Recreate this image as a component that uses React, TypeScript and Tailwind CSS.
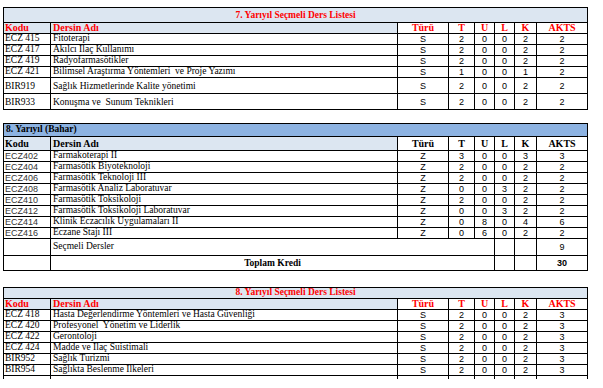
import React from 'react'

type Row = {
  kod: string
  ad: string
  tur: string
  t: string
  u: string
  l: string
  k: string
  akts: string
  tall?: boolean
}

const electives7: Row[] = [
  { kod: 'ECZ 415', ad: 'Fitoterapi', tur: 'S', t: '2', u: '0', l: '0', k: '2', akts: '2' },
  { kod: 'ECZ 417', ad: 'Akılcı İlaç Kullanımı', tur: 'S', t: '2', u: '0', l: '0', k: '2', akts: '2' },
  { kod: 'ECZ 419', ad: 'Radyofarmasötikler', tur: 'S', t: '2', u: '0', l: '0', k: '2', akts: '2' },
  { kod: 'ECZ 421', ad: 'Bilimsel Araştırma Yöntemleri  ve Proje Yazımı', tur: 'S', t: '1', u: '0', l: '0', k: '1', akts: '2' },
  { kod: 'BIR919', ad: 'Sağlık Hizmetlerinde Kalite yönetimi', tur: 'S', t: '2', u: '0', l: '0', k: '2', akts: '2', tall: true },
  { kod: 'BIR933', ad: 'Konuşma ve  Sunum Teknikleri', tur: 'S', t: '2', u: '0', l: '0', k: '2', akts: '2', tall: true },
]

const spring8: Row[] = [
  { kod: 'ECZ402', ad: 'Farmakoterapi II', tur: 'Z', t: '3', u: '0', l: '0', k: '3', akts: '3' },
  { kod: 'ECZ404', ad: 'Farmasötik Biyoteknoloji', tur: 'Z', t: '2', u: '0', l: '0', k: '2', akts: '2' },
  { kod: 'ECZ406', ad: 'Farmasötik Teknoloji III', tur: 'Z', t: '2', u: '0', l: '0', k: '2', akts: '2' },
  { kod: 'ECZ408', ad: 'Farmasötik Analiz Laboratuvar', tur: 'Z', t: '0', u: '0', l: '3', k: '2', akts: '2' },
  { kod: 'ECZ410', ad: 'Farmasötik Toksikoloji', tur: 'Z', t: '2', u: '0', l: '0', k: '2', akts: '2' },
  { kod: 'ECZ412', ad: 'Farmasötik Toksikoloji Laboratuvar', tur: 'Z', t: '0', u: '0', l: '3', k: '2', akts: '2' },
  { kod: 'ECZ414', ad: 'Klinik Eczacılık Uygulamaları II', tur: 'Z', t: '0', u: '8', l: '0', k: '4', akts: '6' },
  { kod: 'ECZ416', ad: 'Eczane Stajı III', tur: 'Z', t: '0', u: '6', l: '0', k: '2', akts: '2' },
]

const electives8: Row[] = [
  { kod: 'ECZ 418', ad: 'Hasta Değerlendirme Yöntemleri ve Hasta Güvenliği', tur: 'S', t: '2', u: '0', l: '0', k: '2', akts: '3' },
  { kod: 'ECZ 420', ad: 'Profesyonel  Yönetim ve Liderlik', tur: 'S', t: '2', u: '0', l: '0', k: '2', akts: '3' },
  { kod: 'ECZ 422', ad: 'Gerontoloji', tur: 'S', t: '2', u: '0', l: '0', k: '2', akts: '3' },
  { kod: 'ECZ 424', ad: 'Madde ve İlaç Suistimali', tur: 'S', t: '2', u: '0', l: '0', k: '2', akts: '3' },
  { kod: 'BIR952', ad: 'Sağlık Turizmi', tur: 'S', t: '2', u: '0', l: '0', k: '2', akts: '3' },
  { kod: 'BIR954', ad: 'Sağlıkta Beslenme İlkeleri', tur: 'S', t: '2', u: '0', l: '0', k: '2', akts: '3' },
]

const cell = "border border-black p-0 leading-none whitespace-pre overflow-hidden font-['Liberation_Serif',serif]"
const num = "border border-black p-0 leading-none text-center font-['Liberation_Sans',sans-serif] text-[9px]"

function Cols() {
  return (
    <colgroup>
      <col className="w-[47px]" />
      <col className="w-[347px]" />
      <col className="w-[51px]" />
      <col className="w-[26px]" />
      <col className="w-[20px]" />
      <col className="w-[20px]" />
      <col className="w-[22px]" />
      <col className="w-[51px]" />
    </colgroup>
  )
}

function Header({ red }: { red?: boolean }) {
  const color = red ? 'text-[#ff0000]' : 'text-black'
  const h = `${cell} font-bold text-[10px] ${color}`
  return (
    <tr className={red ? 'h-[10px]' : 'h-[14px]'}>
      <td className={`${h} bg-[#dce6f1] pl-[1px]`}>Kodu</td>
      <td className={`${h} bg-[#dce6f1] pl-[2px]`}>Dersin Adı</td>
      <td className={`${h} bg-white text-center`}>Türü</td>
      <td className={`${h} bg-white text-center`}>T</td>
      <td className={`${h} bg-white text-center`}>U</td>
      <td className={`${h} bg-white text-center`}>L</td>
      <td className={`${h} bg-white text-center`}>K</td>
      <td className={`${h} bg-white text-center`}>AKTS</td>
    </tr>
  )
}

function CourseRow({ r, sansCode }: { r: Row; sansCode?: boolean }) {
  const align = r.tall ? 'align-bottom pb-[2px]' : 'align-middle'
  const code = sansCode
    ? "border border-black p-0 leading-none font-['Liberation_Sans',sans-serif] text-[9px] text-[#333]"
    : `${cell} text-[9.5px]`
  return (
    <tr className={r.tall ? 'h-[16px]' : 'h-[11px]'}>
      <td className={`${code} ${align} pl-[1px]`}>{r.kod}</td>
      <td className={`${cell} ${align} text-[9.5px] pl-[2px]`}>{r.ad}</td>
      <td className={`${num} ${align}`}>{r.tur}</td>
      <td className={`${num} ${align}`}>{r.t}</td>
      <td className={`${num} ${align}`}>{r.u}</td>
      <td className={`${num} ${align}`}>{r.l}</td>
      <td className={`${num} ${align}`}>{r.k}</td>
      <td className={`${num} ${align}`}>{r.akts}</td>
    </tr>
  )
}

export default function App() {
  return (
    <div className="w-[603px] h-[388px] overflow-hidden bg-white font-['Liberation_Serif',serif] text-black pt-[7px] pl-[3px] flex flex-col">
      {/* 7. yarıyıl seçmeli */}
      <table className="table-fixed border-collapse w-[584px]">
        <Cols />
        <tbody>
          <tr className="h-[15px]">
            <td colSpan={8} className={`${cell} bg-[#dce6f1] text-center font-bold text-[9.5px] text-[#ff0000] align-bottom pb-[2px]`}>
              7. Yarıyıl Seçmeli Ders Listesi
            </td>
          </tr>
          <Header red />
          {electives7.map(r => <CourseRow key={r.kod} r={r} />)}
        </tbody>
      </table>

      {/* 8. yarıyıl bahar */}
      <table className="table-fixed border-collapse w-[585px] mt-[13px]">
        <Cols />
        <tbody>
          <tr className="h-[13px]">
            <td colSpan={8} className={`${cell} bg-[#8db3e2] font-bold text-[9.5px] pl-[2px]`}>
              8. Yarıyıl (Bahar)
            </td>
          </tr>
          <Header />
          {spring8.map(r => <CourseRow key={r.kod} r={r} sansCode />)}
          <tr className="h-[17px]">
            <td className={cell} />
            <td colSpan={4} className={`${cell} text-[9.5px] pl-[2px]`}>Seçmeli Dersler</td>
            <td className={cell} />
            <td className={cell} />
            <td className={num}>9</td>
          </tr>
          <tr className="h-[15px]">
            <td className={cell} />
            <td colSpan={4} className={`${cell} text-center font-bold text-[9.5px] align-bottom pb-[2px]`}>Toplam Kredi</td>
            <td className={cell} />
            <td className={cell} />
            <td className={`${num} font-bold align-bottom pb-[2px]`}>30</td>
          </tr>
        </tbody>
      </table>

      {/* 8. yarıyıl seçmeli */}
      <table className="table-fixed border-collapse w-[584px] mt-[16px]">
        <Cols />
        <tbody>
          <tr className="h-[11px]">
            <td colSpan={8} className={`${cell} bg-[#dce6f1] text-center font-bold text-[9.5px] text-[#ff0000]`}>
              8. Yarıyıl Seçmeli Ders Listesi
            </td>
          </tr>
          <Header red />
          {electives8.map(r => <CourseRow key={r.kod} r={r} />)}
          <tr className="h-[3px]">
            {Array.from({ length: 8 }).map((_, i) => (
              <td key={i} className="border-x border-black p-0 leading-none text-[1px]" />
            ))}
          </tr>
        </tbody>
      </table>
    </div>
  )
}
